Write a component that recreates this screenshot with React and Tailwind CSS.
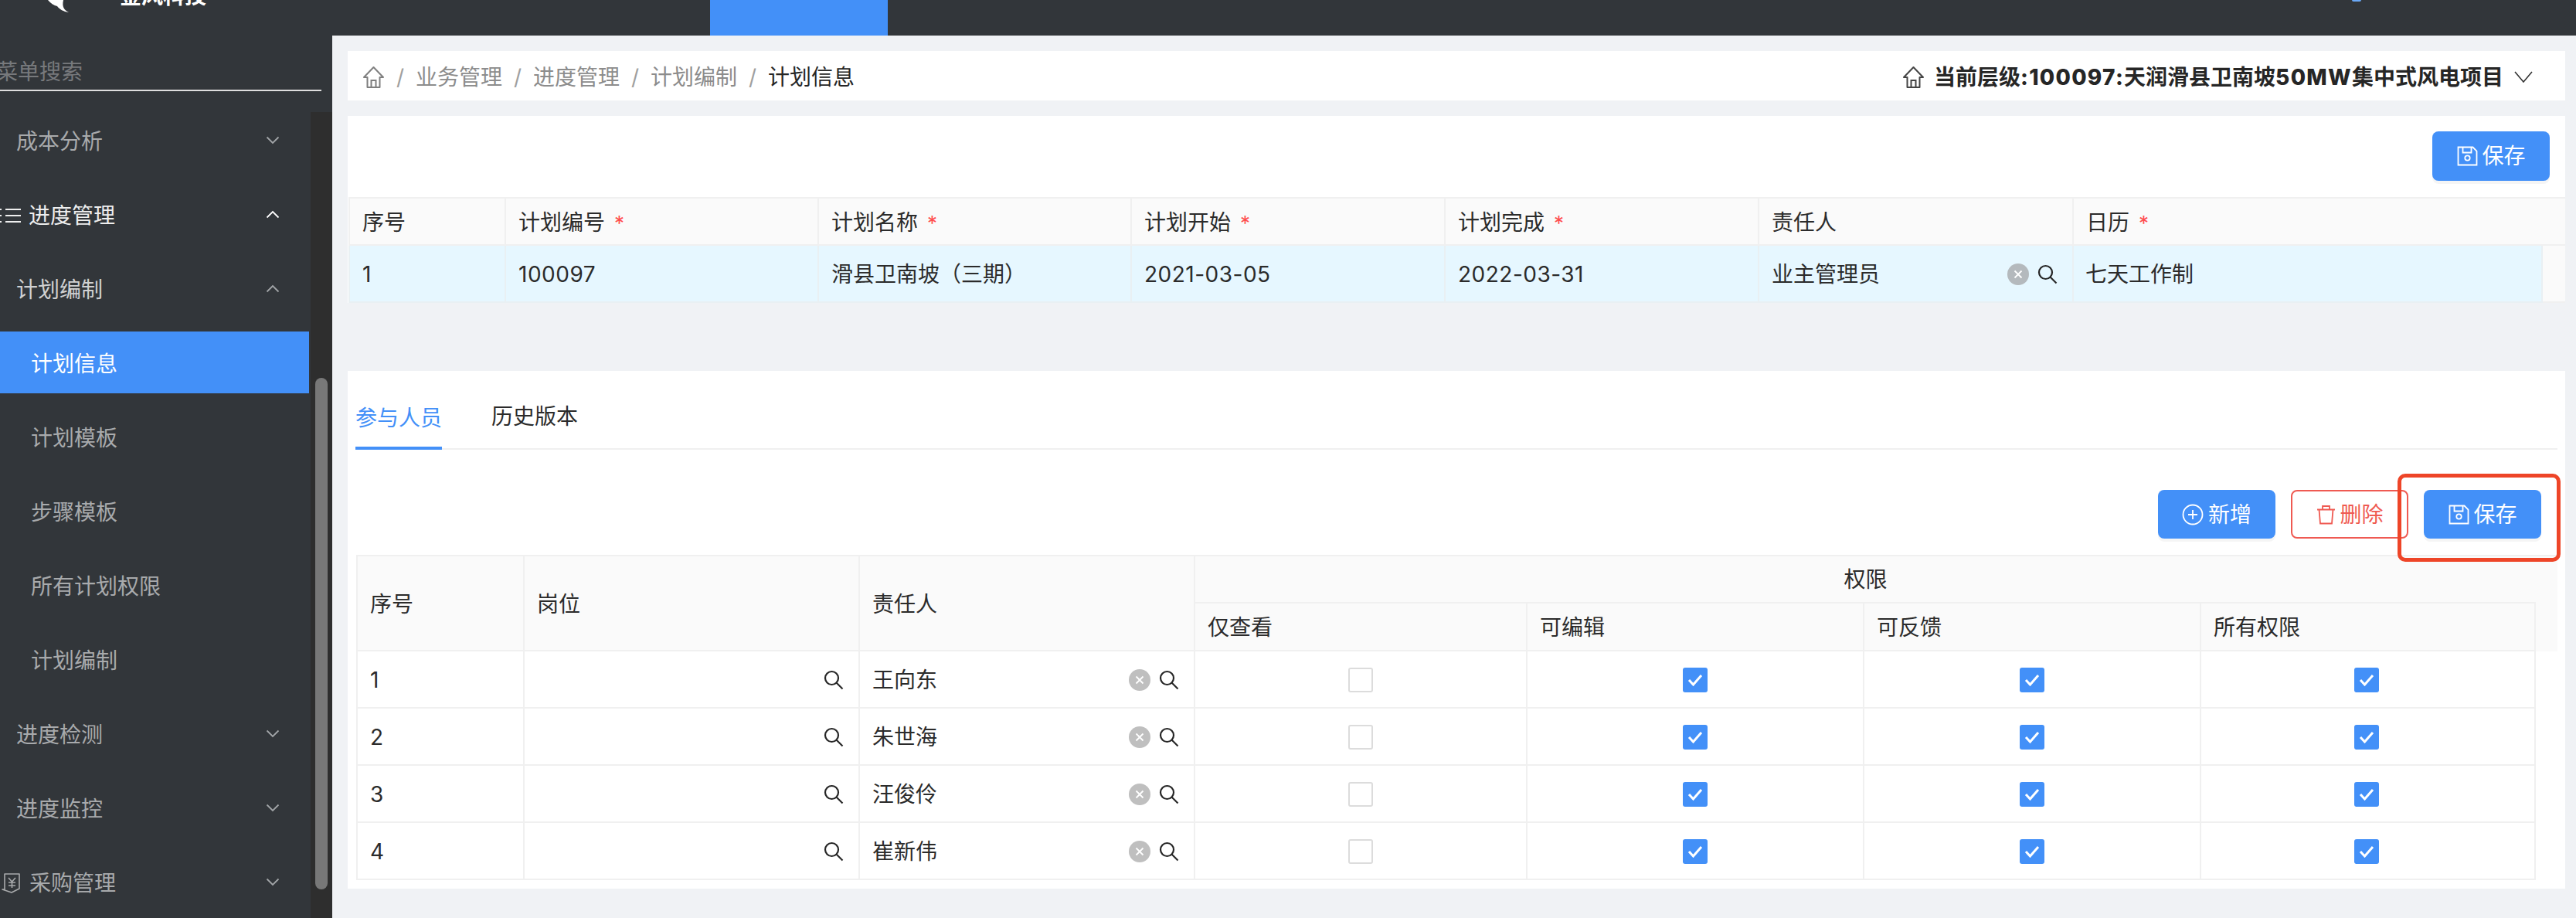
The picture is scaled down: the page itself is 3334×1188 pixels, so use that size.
import React from 'react';

const ChevronDown = ({ className = 'text-[#a2a5a8]' }) => (
    <svg width="18" height="11" viewBox="0 0 18 11" fill="none" stroke="currentColor" strokeWidth="1.8" className={className}>
        <path d="M1.5 1.5 9 9l7.5-7.5" />
    </svg>
);

const ChevronUp = ({ className = 'text-[#a2a5a8]' }) => (
    <svg width="18" height="11" viewBox="0 0 18 11" fill="none" stroke="currentColor" strokeWidth="1.8" className={className}>
        <path d="M1.5 9.5 9 2l7.5 7.5" />
    </svg>
);

const HomeIcon = ({ className }) => (
    <svg width="29" height="30" viewBox="0 0 29 30" fill="none" stroke="currentColor" strokeWidth="2" className={className}>
        <path d="M14.5 2 2 15h4.500v13h16V15H27L14.500 2Z" strokeLinejoin="round" />
        <path d="M11.500 28v-9h6v9" />
    </svg>
);

const SearchIcon = () => (
    <svg width="26" height="26" viewBox="0 0 26 26" fill="none" stroke="#262626" strokeWidth="2.2" className="shrink-0">
        <circle cx="10.500" cy="10.500" r="8.500" />
        <path d="m16.500 16.500 8 8" />
    </svg>
);

const ClearIcon = ({ className }) => (
    <span className={`flex h-7 w-7 shrink-0 items-center justify-center rounded-full ${className}`}>
        <svg width="12" height="12" viewBox="0 0 12 12" stroke="#ffffff" strokeWidth="1.800">
            <path d="m1.500 1.500 9 9M10.500 1.500l-9 9" />
        </svg>
    </span>
);

const SaveIcon = () => (
    <svg width="27" height="26" viewBox="0 0 27 26" fill="none" stroke="currentColor" strokeWidth="1.800">
        <path d="M1.500 1.500h19l5 5v18h-24v-23Z" />
        <path d="M7.500 1.500v7h11v-7" />
        <circle cx="13.500" cy="15.500" r="3.200" />
    </svg>
);

const PlusIcon = () => (
    <svg width="28" height="28" viewBox="0 0 28 28" fill="none" stroke="currentColor" strokeWidth="1.800">
        <circle cx="14" cy="14" r="12.500" />
        <path d="M14 8v12M8 14h12" />
    </svg>
);

const TrashIcon = () => (
    <svg width="25" height="26" viewBox="0 0 25 26" fill="none" stroke="currentColor" strokeWidth="1.800">
        <path d="M1 6.500h23M8 6.500V2h9v4.500M3.500 6.500l1.500 18h15l1.500-18" />
    </svg>
);

const ListIcon = () => (
    <svg width="28" height="22" viewBox="0 0 28 22" stroke="currentColor" strokeWidth="2.200" className="-ml-px shrink-0">
        <path d="M8 3h20M8 11h20M8 19h20" />
        <path d="M0 3h3M0 11h3M0 19h3" />
    </svg>
);

const PurchaseIcon = () => (
    <svg width="26" height="26" viewBox="0 0 26 26" fill="none" stroke="currentColor" strokeWidth="1.600" className="shrink-0">
        <path d="M4 1h19v19l-10 5-12-4h3V1Z" strokeLinejoin="round" />
        <path d="m9 6 4.500 5L18 6M9 12h9M9 16h9M13.500 11v8" />
    </svg>
);

const Logo = () => (
    <svg width="28" height="16" viewBox="0 0 28 16" fill="#ffffff">
        <path d="M0 0c3 4 8 7 12 8 3 4 8 7 15 8-6-3-9-7-7-16H0Z" />
    </svg>
);

const Required = () => <span className="ml-[12px] text-[26px] leading-none text-[#ff4d4f]">*</span>;

const Button = ({ icon, label, outline }) => (
    <button
        className={`flex h-[63px] w-[152px] items-center justify-center gap-[6px] rounded-lg text-[28px] ${
            outline
                ? 'border-2 border-[#ef5a52] bg-white text-[#ef5a52]'
                : 'bg-[#4390f8] text-white shadow-[0_4px_0_rgba(0,0,0,0.04)]'
        }`}
    >
        {icon}
        <span>{label}</span>
    </button>
);

const Checkbox = ({ checked }) =>
    checked ? (
        <span className="mx-auto flex h-8 w-8 items-center justify-center rounded-[3px] bg-[#4390f8]">
            <svg width="20" height="16" viewBox="0 0 20 16" fill="none" stroke="#ffffff" strokeWidth="3">
                <path d="m2 8 5.500 6L18 2" />
            </svg>
        </span>
    ) : (
        <span className="mx-auto block h-8 w-8 rounded-[3px] border-2 border-[#dcdcdc] bg-white" />
    );

const menu = [
    { label: '成本分析', pad: 'pl-[21px]', arrow: 'down' },
    { label: '进度管理', pad: 'pl-0', arrow: 'up', strong: true, icon: <ListIcon /> },
    { label: '计划编制', pad: 'pl-[21px]', arrow: 'up', light: true },
    { label: '计划信息', pad: 'pl-[40px]', active: true },
    { label: '计划模板', pad: 'pl-[40px]' },
    { label: '步骤模板', pad: 'pl-[40px]' },
    { label: '所有计划权限', pad: 'pl-[40px]' },
    { label: '计划编制', pad: 'pl-[40px]' },
    { label: '进度检测', pad: 'pl-[21px]', arrow: 'down' },
    { label: '进度监控', pad: 'pl-[21px]', arrow: 'down' },
    { label: '采购管理', pad: 'pl-[2px]', arrow: 'down', icon: <PurchaseIcon /> },
];

const planHeaders = [
    { label: '序号' },
    { label: '计划编号', required: true },
    { label: '计划名称', required: true },
    { label: '计划开始', required: true },
    { label: '计划完成', required: true },
    { label: '责任人' },
];

const members = [
    { id: 1, name: '王向东' },
    { id: 2, name: '朱世海' },
    { id: 3, name: '汪俊伶' },
    { id: 4, name: '崔新伟' },
];

const Sidebar = () => (
    <aside className="flex w-[430px] shrink-0 flex-col overflow-hidden bg-[#32363a]">
        <div className="h-[95px] shrink-0">
            <div className="w-[416px] border-b-2 border-[#dedede] pb-[6px] pt-[30px] text-[28px] leading-[34px] text-[#77797c]">
                <span className="-ml-[5px] block">菜单搜索</span>
            </div>
        </div>
        <div className="flex flex-1">
            <ul className="flex w-[400px] shrink-0 flex-col gap-4">
                {menu.map((item, i) => (
                    <li
                        key={i}
                        className={`flex h-20 shrink-0 items-center justify-between pr-[38px] text-[28px] ${item.pad} ${
                            item.active
                                ? 'bg-[#4390f8] text-white'
                                : item.strong
                                  ? 'text-[#eeeeee]'
                                  : item.light
                                    ? 'text-[#d0d1d2]'
                                    : 'text-[#a8aaac]'
                        }`}
                    >
                        <span className="flex items-center gap-[10px] pt-[3px]">
                            {item.icon}
                            {item.label}
                        </span>
                        {item.arrow === 'down' && <ChevronDown />}
                        {item.arrow === 'up' && <ChevronUp className={item.strong ? 'text-white' : 'text-[#a2a5a8]'} />}
                    </li>
                ))}
            </ul>
            <div className="ml-[2px] mt-1 w-[28px] bg-[#2e2e2e] pl-[6px]">
                <div className="mt-[344px] h-[662px] w-4 rounded-lg bg-[#787878]" />
            </div>
        </div>
    </aside>
);

const Breadcrumb = () => (
    <div className="flex h-16 shrink-0 items-center justify-between bg-white pl-[19px] pr-[42px] pt-[3px] text-[28px]">
        <div className="flex items-center text-[#8c8c8c]">
            <HomeIcon className="text-[#7f7f7f]" />
            {['业务管理', '进度管理', '计划编制'].map((name) => (
                <React.Fragment key={name}>
                    <span className="w-[40px] text-center text-[#a0a0a0]">/</span>
                    <span>{name}</span>
                </React.Fragment>
            ))}
            <span className="w-[40px] text-center text-[#a0a0a0]">/</span>
            <span className="text-[#262626]">计划信息</span>
        </div>
        <div className="flex items-center text-[#262626]">
            <HomeIcon className="mr-3 text-[#444444]" />
            <span className="font-semibold">
                当前层级<b className="font-extrabold tracking-[1.3px]">:100097:</b>天润滑县卫南坡<b className="font-extrabold tracking-[1.3px]">50MW</b>集中式风电项目
            </span>
            <svg width="24" height="15" viewBox="0 0 24 15" fill="none" stroke="#333333" strokeWidth="1.600" className="ml-[14px]">
                <path d="m1 1 11 13L23 1" />
            </svg>
        </div>
    </div>
);

const PlanCard = () => (
    <section className="mt-5 shrink-0 bg-white">
        <div className="flex h-[105px] justify-end pr-5 pt-5">
            <button className="flex h-16 w-[152px] items-center justify-center gap-[6px] rounded-lg bg-[#4390f8] text-[28px] text-white shadow-[0_4px_0_rgba(0,0,0,0.04)]">
                <SaveIcon />
                <span>保存</span>
            </button>
        </div>
        <table className="ml-px w-[2869px] table-fixed border-separate border-spacing-0 text-left text-[28px] tracking-[0.5px] text-[#2b2b2b]">
            <colgroup>
                <col className="w-[204px]" />
                <col className="w-[405px]" />
                <col className="w-[405px]" />
                <col className="w-[406px]" />
                <col className="w-[406px]" />
                <col className="w-[407px]" />
                <col className="w-[607px]" />
                <col className="w-[29px]" />
            </colgroup>
            <thead>
                <tr className="h-[63px]">
                    {planHeaders.map((h, i) => (
                        <th
                            key={h.label}
                            className={`border-b-2 border-r-2 border-t-2 border-[#f0f0f0] bg-[#fafafa] pl-4 pt-[2px] font-normal tracking-normal ${i === 0 ? 'border-l-2' : ''}`}
                        >
                            {h.label}
                            {h.required && <Required />}
                        </th>
                    ))}
                    <th colSpan={2} className="border-b-2 border-t-2 border-[#f0f0f0] bg-[#fafafa] pl-4 pt-[2px] font-normal tracking-normal">
                        日历
                        <Required />
                    </th>
                </tr>
            </thead>
            <tbody>
                <tr className="h-[74px] bg-[#e6f7ff]">
                    {['1', '100097', '滑县卫南坡（三期）', '2021-03-05', '2022-03-31'].map((text, i) => (
                        <td key={text} className={`border-b-2 border-r-2 border-[#e9f0f3] pl-4 pt-[2px] ${i === 0 ? 'border-l-2' : ''} ${i === 2 ? 'tracking-normal' : ''}`}>
                            {text}
                        </td>
                    ))}
                    <td className="border-b-2 border-r-2 border-[#e9f0f3] pl-4 pr-[19px] pt-[2px] tracking-normal">
                        <div className="flex items-center">
                            <span className="flex-1">业主管理员</span>
                            <ClearIcon className="mr-[11px] bg-[#b4b9bd]" />
                            <SearchIcon />
                        </div>
                    </td>
                    <td className="border-b-2 border-r-2 border-[#e9f0f3] pl-[15px] pt-[2px] tracking-normal">七天工作制</td>
                    <td className="border-b-2 border-[#f0f0f0] bg-[#fafafa]" />
                </tr>
            </tbody>
        </table>
    </section>
);

const MemberCard = () => (
    <section className="relative mt-[88px] h-[670px] shrink-0 bg-white pl-[10px] pr-[10px]">
        <div className="flex h-[102px] items-end border-b-2 border-[#f0f0f0] text-[28px]">
            <span className="-mb-[2px] flex h-[62px] w-[112px] items-start justify-center border-b-4 border-[#4390f8] text-[#4390f8]">参与人员</span>
            <span className="ml-[64px] h-[62px] text-[#2b2b2b]">历史版本</span>
        </div>
        <div className="mt-[52px] flex justify-end gap-5 pr-[21px]">
            <Button icon={<PlusIcon />} label="新增" />
            <Button icon={<TrashIcon />} label="删除" outline />
            <Button icon={<SaveIcon />} label="保存" />
        </div>
        <table className="ml-px mt-[21px] w-[2849px] table-fixed border-separate border-spacing-0 text-left text-[28px] text-[#2b2b2b]">
            <colgroup>
                <col className="w-[218px]" />
                <col className="w-[434px]" />
                <col className="w-[434px]" />
                <col className="w-[430px]" />
                <col className="w-[436px]" />
                <col className="w-[436px]" />
                <col className="w-[433px]" />
                <col className="w-[28px]" />
            </colgroup>
            <thead>
                <tr className="h-[63px]">
                    <th rowSpan={2} className="border-b-2 border-l-2 border-r-2 border-t-2 border-[#f0f0f0] bg-[#fafafa] pl-4 pt-[2px] font-normal">序号</th>
                    <th rowSpan={2} className="border-b-2 border-r-2 border-t-2 border-[#f0f0f0] bg-[#fafafa] pl-4 pt-[2px] font-normal">岗位</th>
                    <th rowSpan={2} className="border-b-2 border-r-2 border-t-2 border-[#f0f0f0] bg-[#fafafa] pl-4 pt-[2px] font-normal">责任人</th>
                    <th colSpan={4} className="border-b-2 border-t-2 border-[#f0f0f0] bg-[#fafafa] text-center font-normal">权限</th>
                    <th rowSpan={6} className="border-t-2 border-[#f0f0f0] bg-[#fafafa]" />
                </tr>
                <tr className="h-[62px]">
                    {['仅查看', '可编辑', '可反馈', '所有权限'].map((h) => (
                        <th key={h} className="border-b-2 border-r-2 border-[#f0f0f0] bg-[#fafafa] pl-4 pt-[2px] font-normal">{h}</th>
                    ))}
                </tr>
            </thead>
            <tbody>
                {members.map((m) => (
                    <tr key={m.id} className="h-[74px]">
                        <td className="border-b-2 border-l-2 border-r-2 border-[#f0f0f0] pl-4 pt-[2px]">{m.id}</td>
                        <td className="border-b-2 border-r-2 border-[#f0f0f0] pr-[19px] pt-[2px]">
                            <div className="flex justify-end">
                                <SearchIcon />
                            </div>
                        </td>
                        <td className="border-b-2 border-r-2 border-[#f0f0f0] pl-4 pr-[19px] pt-[2px]">
                            <div className="flex items-center">
                                <span className="flex-1">{m.name}</span>
                                <ClearIcon className="mr-[11px] bg-[#bfbfbf]" />
                                <SearchIcon />
                            </div>
                        </td>
                        <td className="border-b-2 border-r-2 border-[#f0f0f0] pt-[2px]"><Checkbox /></td>
                        <td className="border-b-2 border-r-2 border-[#f0f0f0] pt-[2px]"><Checkbox checked /></td>
                        <td className="border-b-2 border-r-2 border-[#f0f0f0] pt-[2px]"><Checkbox checked /></td>
                        <td className="border-b-2 border-r-2 border-[#f0f0f0] pr-[3px] pt-[2px]"><Checkbox checked /></td>
                    </tr>
                ))}
            </tbody>
        </table>
        {/* annotation drawn over the screenshot */}
        <div className="absolute right-[6px] top-[133px] h-[114px] w-[211px] rounded-[10px] border-[5px] border-[#ee4528]" />
    </section>
);

const App = () => (
    <div className="flex h-[1188px] w-[3334px] flex-col overflow-hidden font-['Inter','Noto_Sans_CJK_SC',sans-serif]">
        <header className="flex h-[46px] shrink-0 items-start overflow-hidden bg-[#32363a]">
            <div className="ml-[62px]">
                <Logo />
            </div>
            <span className="ml-[65px] -mt-[22px] text-[28px] font-bold leading-[34px] text-white">金风科技</span>
            <div className="ml-[652px] h-full w-[230px] bg-[#4390f8]" />
            <div className="ml-[1895px] h-[2px] w-3 rounded-b bg-[#6aa8f5]" />
        </header>
        <div className="flex min-h-0 flex-1">
            <Sidebar />
            <main className="flex flex-1 flex-col bg-[#f0f2f5] pl-5 pr-[14px] pt-5">
                <Breadcrumb />
                <PlanCard />
                <MemberCard />
            </main>
        </div>
    </div>
);

export default App;
